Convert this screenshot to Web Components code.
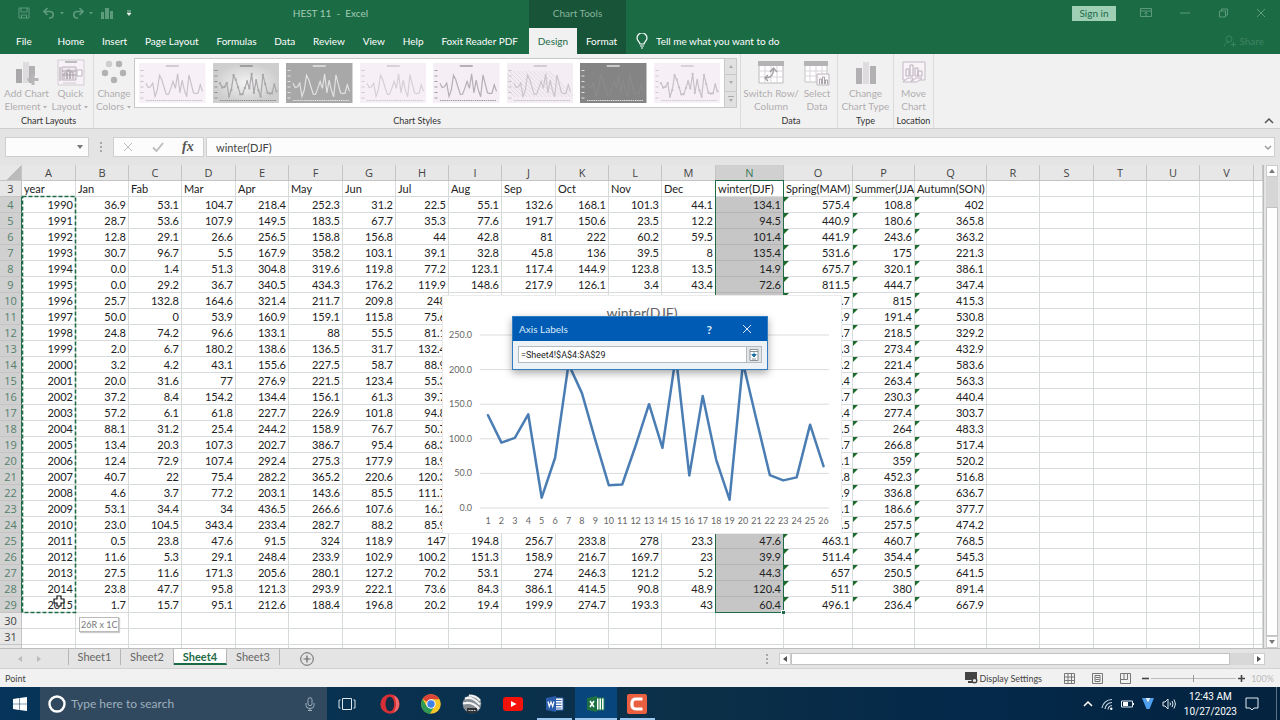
<!DOCTYPE html>
<html lang="en">
<head>
<meta charset="utf-8">
<title>HEST 11 - Excel</title>
<style>
  :root {
    --green: #1b6b45;
    --green-dark: #185437;
    --green-soft: #5d9b7d;
    --chrome: #e4e4e4;
    --ribbon: #f2f1f1;
    --line: #cfcfcf;
    --disabled: #b0aeb0;
    --font-ui: Lato, "Open Sans", sans-serif;
  }
  body {
    margin: 0;
    height: 100vh;
    overflow: hidden;
    display: flex;
    flex-direction: column;
    font-family: var(--font-ui);
    font-size: 11px;
    color: #333;
    background: var(--chrome);
  }
</style>
</head>
<body>
<excel-header></excel-header>
<excel-ribbon></excel-ribbon>
<formula-bar value="winter(DJF)"></formula-bar>
<sheet-view>
  <line-chart heading="winter(DJF)"></line-chart>
  <axis-dialog heading="Axis Labels" value="=Sheet4!$A$4:$A$29"></axis-dialog>
</sheet-view>
<sheet-tabs active="Sheet4" names="Sheet1,Sheet2,Sheet4,Sheet3"></sheet-tabs>
<status-bar></status-bar>
<task-bar></task-bar>

<script>
const SERIES = [134.1, 94.5, 101.4, 135.4, 14.9, 72.6, 208, 166, 98, 33, 34, 90, 150, 87, 220, 47, 162, 70, 12, 210, 128, 47.6, 39.9, 44.3, 120.4, 60.4]

const ICONS = {
  save: ['0 0 12 12', '<path d="M1 1h10v10H1zM3 1v4h6V1M3.500 11V8h5v3" fill="none" stroke="currentColor"/>'],
  undo: ['0 0 12 12', '<path d="M4.500 1L1 4.500 4.500 8M1 4.500h6.500a3.300 3.300 0 0 1 0 6.500H6" fill="none" stroke="currentColor" stroke-width="1.600"/>'],
  redo: ['0 0 12 12', '<path d="M7.500 1L11 4.500 7.500 8M11 4.500H4.500a3.300 3.300 0 0 0 0 6.500H6" fill="none" stroke="currentColor" stroke-width="1.600"/>'],
  bars: ['0 0 12 12', '<path d="M0 5h3v7H0zM4 1h4v11H4zM9 4h3v8H9z" fill="currentColor"/>'],
  caret: ['0 0 6 4', '<path d="M1 1h4L3 3.500z" fill="currentColor"/>'],
  customize: ['0 0 6 6', '<path d="M1 1h4M1 3h4L3 5.500z" fill="currentColor" stroke="currentColor" stroke-width=".6"/>'],
  bulb: ['0 0 12 16', '<path d="M4 11c0-2-3-3-3-6a5 5 0 0 1 10 0c0 3-3 4-3 6zM4 13h4M5 15h2" fill="none" stroke="currentColor" stroke-width="1.200"/>'],
  display: ['0 0 12 10', '<path d="M.5.500h11v8H.5z" fill="none" stroke="currentColor"/><path d="M.5 3h11M6 8V4M4.500 5.500L6 4l1.500 1.500" fill="none" stroke="currentColor"/>'],
  minimize: ['0 0 10 10', '<path d="M0 5h10" stroke="currentColor"/>'],
  restore: ['0 0 10 10', '<path d="M1.500 3h6v6h-6zM3.500 3V1h6v6h-2" fill="none" stroke="currentColor"/>'],
  close: ['0 0 10 10', '<path d="M1 1l8 8M9 1L1 9" stroke="currentColor" fill="none"/>'],
  share: ['0 0 12 12', '<circle cx="5" cy="4" r="3" fill="none" stroke="currentColor"/><path d="M0 11.500c.5-3 2.500-4.500 5-4.500M7 9.500h5M9.500 7v5" fill="none" stroke="currentColor"/>'],
  addElement: ['0 0 26 26', '<path d="M2 9h6v14H2z" fill="#a9a7aa"/><path d="M9 2h6v21H9z" fill="#dedcdf"/><path d="M15 6h6v10h-3v7h-3z" fill="#b2b0b3"/><path d="M19 14v11M13.500 19.500h11" stroke="#b8b6b9" stroke-width="3"/>'],
  quickLayout: ['0 0 28 28', '<path d="M1 1h26v25H1z" fill="#f7f2f7" stroke="#d3cbd3"/><path d="M8 3h12" stroke="#aaa" stroke-width="1.500"/><path d="M5 8h14v13H5z" fill="#eee8ee" stroke="#bbb3bb"/><path d="M3 8v14M7 20v-6h3v6M10 20v-9h3v9M13 20v-7h3v7M5 12h14M5 16h14" stroke="#a8a2a8" fill="none"/><path d="M20 11h5v6h-5z" fill="#fff" stroke="#bbb3bb"/><path d="M6 24h13" stroke="#ccc"/>'],
  colors: ['0 0 28 26', '<g fill="#b3b1b3"><circle cx="9" cy="4" r="3.200" fill="#cfcdcf"/><circle cx="19" cy="4" r="3.200"/><circle cx="5" cy="13" r="3.200"/><circle cx="23" cy="13" r="3.200"/><circle cx="14" cy="20" r="3.200"/></g>'],
  switchData: ['0 0 26 26', '<path d="M1 3h24v20H1z" fill="#fff" stroke="#bcb9bc"/><path d="M0 1h26v5H0z" fill="#b5b3b5"/><path d="M1 11h24M1 17h24M7 6v17M13 6v17M19 6v17" stroke="#d9d5d9"/><path d="M7.500 18c6 0 8-3 8-9M10 15l-3 3 3 3M12 12l3.500-4 3.500 4" fill="none" stroke="#a19fa1" stroke-width="1.400"/>'],
  selectData: ['0 0 26 26', '<path d="M1 3h22v19H1z" fill="#fff" stroke="#c4c1c4"/><path d="M0 1h24v5H0z" fill="#b5b3b5"/><path d="M1 11h22M1 16h22M6 6v16M12 6v16M18 6v16" stroke="#d9d5d9"/><path d="M13 14h12v11H13z" fill="#faf7fa" stroke="#bbb5bb"/><path d="M15.500 24v-5h2v5M18.500 24v-7h2v7M21.500 24v-4h2v4" fill="none" stroke="#aaa5aa"/>'],
  chartType: ['0 0 26 26', '<path d="M3 8h6v16H3z" fill="#b2b0b3"/><path d="M10 2h6v22h-6z" fill="#dedcdf"/><path d="M17 6h6v18h-6z" fill="#b2b0b3"/>'],
  moveChart: ['0 0 26 26', '<path d="M2 2h22v18H2z" fill="#f7f3f7" stroke="#c5b9c5"/><path d="M5 16V9h3v7zM9 16V5h3v11zM14 16V8h3v8zM17 16v-5h4v5z" fill="none" stroke="#bcb0bc"/><path d="M2 22l5-4h5l-2 4zM10 22l5-4h6l-5 4z" fill="#f7f3f7" stroke="#c5b9c5"/>'],
  check: ['0 0 12 10', '<path d="M1 5.500L4.500 9 11 1" fill="none" stroke="currentColor" stroke-width="1.800"/>'],
  chevronUp: ['0 0 10 6', '<path d="M1 5l4-4 4 4" fill="none" stroke="currentColor" stroke-width="1.500"/>'],
  chevronDown: ['0 0 8 5', '<path d="M1 1l3 3 3-3" fill="none" stroke="currentColor" stroke-width="1.400"/>'],
  up: ['0 0 8 6', '<path d="M1 5h6L4 1z" fill="currentColor"/>'],
  down: ['0 0 8 6', '<path d="M1 1h6L4 5z" fill="currentColor"/>'],
  upSmall: ['0 0 4 3', '<path d="M0 3h4L2 0z" fill="currentColor"/>'],
  downSmall: ['0 0 4 3', '<path d="M0 0h4L2 3z" fill="currentColor"/>'],
  more: ['0 0 6 6', '<path d="M0 0h6v1H0zM1 3h4L3 6z" fill="currentColor"/>'],
  left: ['0 0 6 8', '<path d="M5 1v6L1 4z" fill="currentColor"/>'],
  right: ['0 0 6 8', '<path d="M1 1v6l4-3z" fill="currentColor"/>'],
  dots: ['0 0 2 10', '<path d="M0 0h2v2H0zM0 4h2v2H0zM0 8h2v2H0z" fill="#a8a8a8"/>'],
  plusCircle: ['0 0 14 14', '<circle cx="7" cy="7" r="6.300" fill="none" stroke="currentColor"/><path d="M7 3.500v7M3.500 7h7" stroke="currentColor" stroke-width="1.200"/>'],
  picker: ['0 0 12 12', '<path d="M2 .5h8v11H2z" fill="#fff" stroke="#8c9296"/><path d="M2 2.500h8M4 10h4" stroke="#8c9296"/><path d="M6 3.500v4M3.800 5.500L6 8l2.200-2.500z" stroke="#1c72a8" fill="#1c72a8"/>'],
  cross: ['0 0 12 14', '<path d="M4 1h4v3h3v4H8v3H4V8H1V4h3z" fill="#fff" stroke="#111" stroke-width="1.200"/>'],
  monitor: ['0 0 13 12', '<path d="M0 0h12v8H0zM3 9h5v2H3z" fill="#444"/><circle cx="9.500" cy="8.500" r="2.300" fill="#eee" stroke="#444" stroke-width="1.400"/>'],
  viewNormal: ['0 0 11 11', '<path d="M.5.500h10v10H.5zM.5 4h10M.5 7.500h10M4 .5v10M7.500.500v10" fill="none" stroke="#777"/>'],
  viewPage: ['0 0 11 11', '<path d="M.5.500h10v10H.5zM3 2.500h5v6H3zM3.500 4.500h4M3.500 6.500h4" fill="none" stroke="#777"/>'],
  viewBreak: ['0 0 11 11', '<path d="M.5.500h10v10H.5zM4 .5v6h3.500v-6M.5 6.500H4" fill="none" stroke="#777"/>'],
  minus: ['0 0 7 7', '<path d="M0 3.500h7" stroke="currentColor" stroke-width="1.600"/>'],
  plus: ['0 0 7 7', '<path d="M0 3.500h7M3.500 0v7" stroke="currentColor" stroke-width="1.600"/>'],
  windows: ['0 0 14 14', '<path d="M0 2l6-1v5.700H0zM6.500.900L14 0v6.700H6.500zM0 7.200h6V13l-6-1zM6.500 7.200H14V14l-7.500-1z" fill="#fff"/>'],
  cortana: ['0 0 18 18', '<circle cx="9" cy="9" r="7.500" fill="none" stroke="#fff" stroke-width="2.400"/>'],
  mic: ['0 0 10 14', '<rect x="3" y=".7" width="4" height="8" rx="2" fill="none" stroke="#9fb0be"/><path d="M1 6v2.500a4 3 0 0 0 8 0V6M5 11.500V14M3 13.500h4" fill="none" stroke="#9fb0be"/>'],
  taskView: ['0 0 18 14', '<path d="M4.500 1.500h9v11h-9zM2.500 3H1v8h1.500M15.500 3H17v8h-1.500" fill="none" stroke="#dbe6ee"/>'],
  opera: ['0 0 20 20', '<circle cx="10" cy="10" r="9.700" fill="#d62f35"/><path d="M13 1a9.700 9.700 0 0 1 0 18c4-4 4-14 0-18z" fill="#f06d6d"/><ellipse cx="9.800" cy="10" rx="4.300" ry="7.300" fill="#0d2c45"/>'],
  chrome: ['0 0 20 20', '<circle cx="10" cy="10" r="9.800" fill="#f6c628"/><path d="M10 10L1.500 5A9.800 9.800 0 0 1 18.500 5.200H10z" fill="#dc4437"/><path d="M10 10L5.800 12.500 1.500 5A9.800 9.800 0 0 0 9 19.800L13.300 12.500z" fill="#2e9a55"/><circle cx="10" cy="10" r="4.700" fill="#fff"/><circle cx="10" cy="10" r="3.700" fill="#3f7fe8"/>'],
  earth: ['0 0 20 20', '<circle cx="10" cy="10" r="9.300" fill="#858c92"/><path d="M3 4.500c6-2 10 1 15 6M1 9.500c7-2 12 0 16 5.500M7 1.500c5 0 8 1.500 11 5" fill="none" stroke="#f2f4f5" stroke-width="2.200"/><path d="M5 14h10v5H5z" fill="#2f3337"/><path d="M6.500 16.500h7" stroke="#ccc" stroke-dasharray="2 .7"/>'],
  youtube: ['0 0 20 14', '<rect width="20" height="14" rx="3" fill="#f5120b"/><path d="M8 4l5.500 3L8 10z" fill="#fff"/>'],
  word: ['0 0 18 16', '<path d="M9 2h8v12H9z" fill="#fff" stroke="#3a66b3"/><path d="M10 4.500h5.500M10 7h5.500M10 9.500h5.500M10 12h5.500" stroke="#3a66b3"/><path d="M0 2l10-2v16L0 14z" fill="#2b5bab"/><path d="M2 5.500l1.300 5L5 6l1.700 4.500L8 5.500" fill="none" stroke="#fff" stroke-width="1.200"/>'],
  excel: ['0 0 18 16', '<path d="M9 2h8v12H9z" fill="#fff" stroke="#1f7a4d"/><path d="M12 2v12M14.500 2v12" stroke="#1f7a4d"/><path d="M0 2l10-2v16L0 14z" fill="#1d7044"/><path d="M3 5l4 6M7 5l-4 6" stroke="#fff" stroke-width="1.500"/>'],
  camtasia: ['0 0 20 20', '<rect width="20" height="20" rx="2" fill="#e95f40"/><path d="M15.500 5H8.500A3.500 3.500 0 0 0 5 8.500v3A3.500 3.500 0 0 0 8.500 15h7" fill="none" stroke="#fff" stroke-width="3.200"/>'],
  wifi: ['0 0 12 12', '<path d="M1 10A10 10 0 0 1 11 1.500M4 11A7 7 0 0 1 11 4.500M7 11.500A4.500 4.500 0 0 1 11 7.500" fill="none" stroke="#c9d4dd" stroke-width="1.200"/><circle cx="10.300" cy="10.800" r="1.200" fill="#fff"/>'],
  battery: ['0 0 13 8', '<path d="M.5 1h11v6H.5z" fill="none" stroke="#dfe6ec"/><path d="M2 2h5v4H2zM12 3h1v2h-1z" fill="#fff"/>'],
  vpn: ['0 0 12 11', '<path d="M0 0h3.500L6 5l2.500-5H12L7.500 11h-3z" fill="#4f9ff0"/><path d="M3.500 0h5L6 5z" fill="#dff0ff"/>'],
  speaker: ['0 0 14 12', '<path d="M1 4h2l3-3v10L3 8H1z" fill="none" stroke="#dfe6ec"/><path d="M8 4.500q1 1.500 0 3M10 3q2 3 0 6M12 1.500q3 4.500 0 9" fill="none" stroke="#dfe6ec"/>'],
  notice: ['0 0 14 14', '<path d="M1 1h12v10H9l-2 2-2-2H1z" fill="none" stroke="#e4ebf0"/>']
}

class AppIcon extends HTMLElement {
  connectedCallback() {
    const [box, shapes] = ICONS[this.getAttribute('name')]
    const [, , width, height] = box.split(' ')
    this.attachShadow({ mode: 'open' })
    this.shadowRoot.innerHTML = `
      <style>
        :host { display: inline-flex; flex: none; }
        svg { display: block; }
      </style>
      <svg viewBox="${box}" width="${width}" height="${height}" aria-hidden="true">${shapes}</svg>
    `
  }
}

class ExcelHeader extends HTMLElement {
  constructor() {
    super()
    this.attachShadow({ mode: 'open' })
    const tabs = ['Home', 'Insert', 'Page Layout', 'Formulas', 'Data', 'Review', 'View', 'Help', 'Foxit Reader PDF']
    this.shadowRoot.innerHTML = `
      <style>
        :host {
          display: grid;
          grid-template-columns: 529px 97px 1fr;
          grid-template-rows: 28px 26px;
          flex: none;
          background: var(--green);
          font-size: 10px;
          color: #fff;
        }
        button {
          border: 0;
          padding: 0;
          background: none;
          font: inherit;
          color: inherit;
          white-space: nowrap;
        }
        .quick, .tabs, .window, .tell { display: flex; align-items: center; padding-bottom: 2px; }
        .quick { padding-left: 18px; color: var(--green-soft); }
        .quick button { display: flex; align-items: center; gap: 4px; margin-right: 13px; }
        .quick button:nth-child(2), .quick button:nth-child(3) { margin-right: 7px; }
        .quick .more { margin: 0; color: #fff; }
        h1 {
          flex: 1;
          margin: 0;
          font-size: 10px;
          font-weight: normal;
          text-align: center;
          white-space: pre;
          color: #a3cbb6;
        }
        .tabs { justify-content: space-between; padding: 0 11px 0 16px; }
        .tabs button:first-child { margin-right: 8px; }
        .context { display: grid; place-items: center; padding-bottom: 2px; background: var(--green-dark); color: #86b59d; }
        .pair { display: grid; grid-template-columns: 48px 1fr; background: var(--green-dark); }
        .pair .active { background: var(--ribbon); color: #216a48; }
        .window { justify-content: flex-end; gap: 28px; padding-right: 14px; color: var(--green-soft); }
        .window .sign { width: 44px; height: 15px; margin-right: -4px; background: #9fd0b5; color: #236a48; }
        .window button { display: flex; align-items: center; justify-content: center; }
        .tell { justify-content: space-between; padding: 0 16px 0 10px; }
        .tell button { display: flex; align-items: center; gap: 8px; }
        .tell .share { gap: 3px; color: #3b8460; }
      </style>
      <div class="quick">
        <button aria-label="Save"><app-icon name="save"></app-icon></button>
        <button aria-label="Undo"><app-icon name="undo"></app-icon><app-icon name="caret"></app-icon></button>
        <button aria-label="Redo"><app-icon name="redo"></app-icon><app-icon name="caret"></app-icon></button>
        <button aria-label="Chart"><app-icon name="bars"></app-icon></button>
        <button class="more" aria-label="Customize"><app-icon name="customize"></app-icon></button>
        <h1>HEST 11  -  Excel</h1>
      </div>
      <div class="context">Chart Tools</div>
      <div class="window">
        <button class="sign">Sign in</button>
        <button aria-label="Ribbon display"><app-icon name="display"></app-icon></button>
        <button aria-label="Minimize"><app-icon name="minimize"></app-icon></button>
        <button aria-label="Restore"><app-icon name="restore"></app-icon></button>
        <button aria-label="Close"><app-icon name="close"></app-icon></button>
      </div>
      <nav class="tabs"><button>File</button>${tabs.map(tab => `<button>${tab}</button>`).join('')}</nav>
      <nav class="pair"><button class="active">Design</button><button>Format</button></nav>
      <div class="tell">
        <button><app-icon name="bulb"></app-icon>Tell me what you want to do</button>
        <button class="share"><app-icon name="share"></app-icon>Share</button>
      </div>
    `
  }
}

class RibbonGroup extends HTMLElement {
  constructor() {
    super()
    this.attachShadow({ mode: 'open' })
    this.shadowRoot.innerHTML = `
      <style>
        :host {
          display: flex;
          flex-direction: column;
          box-sizing: border-box;
          border-right: 1px solid #dcdbdc;
        }
        .items { display: flex; justify-content: center; height: 59px; }
        footer { font-size: 9px; line-height: 15px; text-align: center; white-space: nowrap; color: #333; }
      </style>
      <div class="items"><slot></slot></div>
      <footer></footer>
    `
  }

  connectedCallback() {
    this.shadowRoot.querySelector('footer').textContent = this.getAttribute('label')
  }
}

class RibbonCommand extends HTMLElement {
  connectedCallback() {
    const [first, second] = this.getAttribute('label').split('|')
    const caret = this.hasAttribute('menu') ? '<app-icon name="caret"></app-icon>' : ''
    this.attachShadow({ mode: 'open' })
    this.shadowRoot.innerHTML = `
      <style>
        :host { display: block; flex: none; }
        button {
          display: flex;
          flex-direction: column;
          align-items: center;
          width: 100%;
          padding: 4px 0 0;
          border: 0;
          background: none;
          font: inherit;
          font-size: 10px;
          line-height: 13px;
          color: var(--disabled);
        }
        .icon { display: grid; place-items: center; height: 29px; }
        .line { display: flex; align-items: center; gap: 2px; white-space: nowrap; }
      </style>
      <button>
        <span class="icon"><app-icon name="${this.getAttribute('icon')}"></app-icon></span>
        <span class="line">${first}</span>
        <span class="line">${second}${caret}</span>
      </button>
    `
  }
}

class StyleGallery extends HTMLElement {
  #styles = [
    { back: '#f7f0f7', line: '#c9c4c9', title: '#c5c0c5' },
    { back: 'url(#fade)', line: '#a9a7a9', title: '#8f8d8f', dots: true },
    { back: '#a9a8a9', line: '#e2e1e2', title: '#e6e6e6' },
    { back: '#f6f0f6', line: '#d5d0d5', title: '#cdc8cd' },
    { back: '#f6eef5', line: '#b3b0b3', title: '#9f9c9f' },
    { back: '#f4eef4', line: '#c9c5c9', title: '#c5c0c5', hatch: true },
    { back: '#858485', line: '#8c8b8c', title: '#e0e0e0' },
    { back: '#f7eff6', line: '#c6c2c6', title: '#cfcacf', dots: true }
  ]

  constructor() {
    super()
    this.attachShadow({ mode: 'open' })
    this.shadowRoot.innerHTML = `
      <style>
        :host {
          display: flex;
          flex: 1;
          box-sizing: border-box;
          height: 50px;
          margin: 4px 3px 0 0;
          border: 1px solid #c9c8c9;
          background: #fff;
        }
        .list { flex: 1; display: flex; gap: 7px; padding: 4px; }
        .list button { flex: 1; min-width: 0; padding: 0; border: 0; background: none; }
        .list svg { display: block; width: 100%; height: 40px; }
        .scroll { display: flex; flex-direction: column; width: 12px; background: #e2e1e2; }
        .scroll button {
          flex: 1;
          display: grid;
          place-items: center;
          padding: 0;
          border: 0;
          border-left: 1px solid #c9c8c9;
          border-bottom: 1px solid #c9c8c9;
          background: none;
          color: #aaa;
        }
        .scroll button:last-child { border-bottom: 0; }
      </style>
      <div class="list">${this.#styles.map((style, index) => this.#thumb(style, index)).join('')}</div>
      <div class="scroll">
        <button aria-label="Previous styles"><app-icon name="upSmall"></app-icon></button>
        <button aria-label="Next styles"><app-icon name="downSmall"></app-icon></button>
        <button aria-label="More styles"><app-icon name="more"></app-icon></button>
      </div>
    `
  }

  #thumb({ back, line, title, dots, hatch }, index) {
    const points = SERIES.map((value, i) => [7 + i * 2.28, 35 - value * 0.11])
    const marks = dots ? points.map(([x, y]) => `<path d="M${x - 1} ${y - 1}h2v2h-2z" fill="${line}"/>`).join('') : ''
    const stripes = hatch ? Array.from({ length: 16 }, (_, i) => `<path d="M${i * 4 - 18} 8l26 26" stroke="#d3ced3" stroke-width=".6"/>`).join('') : ''
    return `
      <button aria-label="Style ${index + 1}">
        <svg viewBox="0 0 67 40" preserveAspectRatio="none">
          <defs><radialGradient id="fade"><stop offset="0" stop-color="#f4f3f4"/><stop offset="1" stop-color="#cfcecf"/></radialGradient></defs>
          <rect width="67" height="40" fill="${back}"/>
          ${stripes}
          <path d="M27 3h13" stroke="${title}" stroke-width="1.500"/>
          <path d="M3 7v29" stroke="${title}" stroke-width="3" stroke-dasharray="1 4.500"/>
          <path d="M7 37.500h57" stroke="${title}" stroke-dasharray="1.500 .7"/>
          <polyline points="${points.map(point => point.join()).join(' ')}" fill="none" stroke="${line}" stroke-width="1.200"/>
          ${marks}
        </svg>
      </button>
    `
  }
}

class ExcelRibbon extends HTMLElement {
  constructor() {
    super()
    this.attachShadow({ mode: 'open' })
    this.shadowRoot.innerHTML = `
      <style>
        :host {
          display: flex;
          flex: none;
          border-bottom: 1px solid var(--line);
          background: var(--ribbon);
        }
        .layouts { width: 94px; padding-left: 4px; }
        .styles { flex: 1; max-width: 647px; }
        .data { width: 97px; padding-left: 4px; }
        .type { width: 56px; }
        .location { width: 40px; }
        .w40 { width: 40px; }
        .w44 { width: 44px; }
        .w52 { width: 52px; }
        .collapse {
          display: flex;
          align-items: flex-end;
          margin-left: auto;
          padding: 0 6px 4px;
          border: 0;
          background: none;
          color: #555;
        }
      </style>
      <ribbon-group class="layouts" label="Chart Layouts">
        <ribbon-command class="w44" icon="addElement" label="Add Chart|Element" menu></ribbon-command>
        <ribbon-command class="w44" icon="quickLayout" label="Quick|Layout" menu></ribbon-command>
      </ribbon-group>
      <ribbon-group class="styles" label="Chart Styles">
        <ribbon-command class="w40" icon="colors" label="Change|Colors" menu></ribbon-command>
        <style-gallery></style-gallery>
      </ribbon-group>
      <ribbon-group class="data" label="Data">
        <ribbon-command class="w52" icon="switchData" label="Switch Row/|Column"></ribbon-command>
        <ribbon-command class="w40" icon="selectData" label="Select|Data"></ribbon-command>
      </ribbon-group>
      <ribbon-group class="type" label="Type">
        <ribbon-command class="w52" icon="chartType" label="Change|Chart Type"></ribbon-command>
      </ribbon-group>
      <ribbon-group class="location" label="Location">
        <ribbon-command icon="moveChart" label="Move|Chart"></ribbon-command>
      </ribbon-group>
      <button class="collapse" aria-label="Collapse ribbon"><app-icon name="chevronUp"></app-icon></button>
    `
  }
}

class FormulaBar extends HTMLElement {
  connectedCallback() {
    this.attachShadow({ mode: 'open' })
    this.shadowRoot.innerHTML = `
      <style>
        :host { display: flex; align-items: center; flex: none; height: 36px; padding: 0 5px; }
        .box {
          display: flex;
          align-items: center;
          box-sizing: border-box;
          height: 20px;
          border: 1px solid var(--line);
          background: #fcfcfc;
        }
        .name { width: 84px; margin-right: 11px; padding-right: 4px; color: #777; }
        .tools { width: 91px; margin: 0 2px 0 11px; justify-content: space-around; }
        .formula { flex: 1; padding: 0 2px 0 9px; color: #999; }
        input {
          flex: 1;
          min-width: 0;
          padding: 0;
          border: 0;
          background: none;
          font: inherit;
          color: #444;
        }
        button { display: flex; padding: 0; border: 0; background: none; color: #bbb; }
        .fx { font: italic bold 14px "Liberation Serif", serif; color: #555; }
      </style>
      <div class="box name"><input aria-label="Name box"><app-icon name="down"></app-icon></div>
      <app-icon name="dots"></app-icon>
      <div class="box tools">
        <button aria-label="Cancel"><app-icon name="close"></app-icon></button>
        <button aria-label="Enter"><app-icon name="check"></app-icon></button>
        <button class="fx">fx</button>
      </div>
      <div class="box formula">
        <input aria-label="Formula" value="${this.getAttribute('value')}">
        <app-icon name="chevronDown"></app-icon>
      </div>
    `
  }
}

class SheetView extends HTMLElement {
  #widths = [22, 54, 53, 53, 54, 53, 54, 53, 53, 53, 54, 53, 53, 54, 68, 69, 62, 72, 53, 54, 53, 53, 54]
  #heads = ['year', 'Jan', 'Fab', 'Mar', 'Apr', 'May', 'Jun', 'Jul', 'Aug', 'Sep', 'Oct', 'Nov', 'Dec', 'winter(DJF)', 'Spring(MAM)', 'Summer(JJA)', 'Autumn(SON)']
  // a dash is an empty cell
  #rows = `
    1990 36.9 53.1 104.7 218.4 252.3 31.2 22.5 55.1 132.6 168.1 101.3 44.1 134.1 575.4 108.8 402
    1991 28.7 53.6 107.9 149.5 183.5 67.7 35.3 77.6 191.7 150.6 23.5 12.2 94.5 440.9 180.6 365.8
    1992 12.8 29.1 26.6 256.5 158.8 156.8 44 42.8 81 222 60.2 59.5 101.4 441.9 243.6 363.2
    1993 30.7 96.7 5.5 167.9 358.2 103.1 39.1 32.8 45.8 136 39.5 8 135.4 531.6 175 221.3
    1994 0.0 1.4 51.3 304.8 319.6 119.8 77.2 123.1 117.4 144.9 123.8 13.5 14.9 675.7 320.1 386.1
    1995 0.0 29.2 36.7 340.5 434.3 176.2 119.9 148.6 217.9 126.1 3.4 43.4 72.6 811.5 444.7 347.4
    1996 25.7 132.8 164.6 321.4 211.7 209.8 248 - - - - - - .7 815 415.3
    1997 50.0 0 53.9 160.9 159.1 115.8 75.6 - - - - - - .9 191.4 530.8
    1998 24.8 74.2 96.6 133.1 88 55.5 81.1 - - - - - - .7 218.5 329.2
    1999 2.0 6.7 180.2 138.6 136.5 31.7 132.4 - - - - - - .3 273.4 432.9
    2000 3.2 4.2 43.1 155.6 227.5 58.7 88.9 - - - - - - .2 221.4 583.6
    2001 20.0 31.6 77 276.9 221.5 123.4 55.3 - - - - - - .4 263.4 563.3
    2002 37.2 8.4 154.2 134.4 156.1 61.3 39.7 - - - - - - .7 230.3 440.4
    2003 57.2 6.1 61.8 227.7 226.9 101.8 94.8 - - - - - - .4 277.4 303.7
    2004 88.1 31.2 25.4 244.2 158.9 76.7 50.7 - - - - - - .5 264 483.3
    2005 13.4 20.3 107.3 202.7 386.7 95.4 68.3 - - - - - - .7 266.8 517.4
    2006 12.4 72.9 107.4 292.4 275.3 177.9 18.9 - - - - - - .1 359 520.2
    2007 40.7 22 75.4 282.2 365.2 220.6 120.3 - - - - - - .8 452.3 516.8
    2008 4.6 3.7 77.2 203.1 143.6 85.5 111.7 - - - - - - .9 336.8 636.7
    2009 53.1 34.4 34 436.5 266.6 107.6 16.2 - - - - - - .1 186.6 377.7
    2010 23.0 104.5 343.4 233.4 282.7 88.2 85.9 - - - - - - .5 257.5 474.2
    2011 0.5 23.8 47.6 91.5 324 118.9 147 194.8 256.7 233.8 278 23.3 47.6 463.1 460.7 768.5
    2012 11.6 5.3 29.1 248.4 233.9 102.9 100.2 151.3 158.9 216.7 169.7 23 39.9 511.4 354.4 545.3
    2013 27.5 11.6 171.3 205.6 280.1 127.2 70.2 53.1 274 246.3 121.2 5.2 44.3 657 250.5 641.5
    2014 23.8 47.7 95.8 121.3 293.9 222.1 73.6 84.3 386.1 414.5 90.8 48.9 120.4 511 380 891.4
    2015 1.7 15.7 95.1 212.6 188.4 196.8 20.2 19.4 199.9 274.7 193.3 43 60.4 496.1 236.4 667.9
  `.trim().split('\n').map(row => row.trim().split(' '))

  constructor() {
    super()
    this.attachShadow({ mode: 'open' })
    this.shadowRoot.innerHTML = `
      <style>
        :host { display: flex; flex: 1; min-height: 0; position: relative; }
        .grid { flex: 1; min-width: 0; overflow: hidden; }
        table { width: 100%; table-layout: fixed; border-spacing: 0; background: #fff; }
        td, th {
          box-sizing: border-box;
          height: 16px;
          padding: 0 2px;
          border: 0 solid #d6dadb;
          border-width: 0 1px 1px 0;
          line-height: 15px;
          overflow: hidden;
          white-space: nowrap;
          text-align: right;
          color: #222;
        }
        tr.heads td { text-align: left; }
        th {
          padding: 0;
          background: #e7e7e7;
          border-color: #c4c4c4;
          font-family: "Open Sans", sans-serif;
          font-weight: normal;
          text-align: center;
          color: #444;
        }
        th.picked { background: #d0d0d0; color: #3c765a; }
        tbody th.picked { border-right-color: #2a7350; color: #54806b; }
        td.shade { background: #c6c6c6; border-bottom-color: #b4b4b4; }
        td.warn { background: linear-gradient(135deg, #1d6b2c 3px, transparent 4px); }
        th.corner { background: linear-gradient(135deg, #e7e7e7 60%, #bbb 61%); }
        .scroll {
          display: flex;
          flex-direction: column;
          align-items: center;
          width: 17px;
          box-sizing: border-box;
          border-left: 1px solid #bbb;
          color: #777;
        }
        .scroll button {
          display: grid;
          place-items: center;
          width: 12px;
          height: 12px;
          padding: 0;
          border: 1px solid #ccc;
          background: #fff;
          color: inherit;
        }
        .scroll .track { width: 12px; height: 30px; background: #d6d6d6; }
        .scroll .thumb { flex: 1; width: 10px; border: 1px solid #c2c2c2; background: #fff; }
        .over { position: absolute; box-sizing: border-box; }
        .ants { left: 21px; top: 30px; }
        .range { left: 715px; top: 15px; width: 69px; height: 433px; border: 1px solid #1f6b47; }
        .range::after {
          content: "";
          position: absolute;
          right: -2px;
          bottom: -2px;
          width: 3px;
          height: 3px;
          border: 1px solid #fff;
          border-width: 1px 0 0 1px;
          background: #1f6b47;
        }
        .tip {
          left: 79px;
          top: 452px;
          padding: 0 1px;
          border: 1px solid #bbb;
          background: #fff;
          font-size: 9px;
          line-height: 13px;
          color: #777;
          box-shadow: 1px 1px 1px #ccc;
        }
        .pointer { left: 53px; top: 430px; }
      </style>
      <div class="grid"></div>
      <div class="scroll">
        <button aria-label="Scroll up"><app-icon name="up"></app-icon></button>
        <div class="track"></div>
        <div class="thumb"></div>
        <button aria-label="Scroll down"><app-icon name="down"></app-icon></button>
      </div>
      <svg class="over ants" width="56" height="420">
        <rect x="1.500" y="1.500" width="53" height="416" fill="none" stroke="#1f6b47" stroke-width="1.600" stroke-dasharray="4 2"/>
      </svg>
      <div class="over range"></div>
      <slot></slot>
      <div class="over tip">26R x 1C</div>
      <app-icon class="over pointer" name="cross"></app-icon>
    `
  }

  connectedCallback() {
    this.#render()
  }

  #cell(value, column, filled) {
    const kind = filled && column === 13 ? ' class="shade"' : filled && column > 13 && column < 17 ? ' class="warn"' : ''
    return `<td${kind}>${!value || value === '-' ? '' : value}</td>`
  }

  #line(number, values) {
    const filled = number > 3 && number < 30
    const cells = Array.from({ length: 23 }, (_, column) => this.#cell(values[column], column, filled)).join('')
    return `<tr${number === 3 ? ' class="heads"' : ''}><th${filled ? ' class="picked"' : ''}>${number || ''}</th>${cells}</tr>`
  }

  #render() {
    const letters = [...'ABCDEFGHIJKLMNOPQRSTUV']
    this.shadowRoot.querySelector('.grid').innerHTML = `
      <table>
        <colgroup>${this.#widths.map(width => `<col style="width: ${width}px">`).join('')}<col></colgroup>
        <thead><tr>
          <th class="corner"></th>
          ${letters.map(letter => `<th${letter === 'N' ? ' class="picked"' : ''}>${letter}</th>`).join('')}
          <th></th>
        </tr></thead>
        <tbody>
          ${this.#line(3, this.#heads)}
          ${this.#rows.map((row, index) => this.#line(index + 4, row)).join('')}
          ${this.#line(30, [])}
          ${this.#line(31, [])}
          ${this.#line(0, [])}
        </tbody>
      </table>
    `
  }
}

class LineChart extends HTMLElement {
  connectedCallback() {
    this.attachShadow({ mode: 'open' })
    const x = index => 46 + index * 13.42
    const y = value => 213 - value * 0.692
    const levels = [0, 50, 100, 150, 200, 250]
    this.shadowRoot.innerHTML = `
      <style>
        :host {
          display: block;
          position: absolute;
          left: 442px;
          top: 130px;
          width: 400px;
          height: 239px;
          background: #fff;
          box-shadow: inset 0 0 0 1px #ebebeb;
        }
        text { font-size: 9px; fill: #666; }
        .heading { font-size: 14px; }
      </style>
      <svg width="400" height="239" role="img" aria-label="${this.getAttribute('heading')}">
        <text class="heading" x="200" y="23" text-anchor="middle">${this.getAttribute('heading')}</text>
        ${levels.map(level => `
          <path d="M38 ${y(level)}H387" stroke="#dcdcdc"/>
          <text x="30" y="${y(level) + 3}" text-anchor="end">${level.toFixed(1)}</text>
        `).join('')}
        ${SERIES.map((_, index) => `<text x="${x(index)}" y="229" text-anchor="middle">${index + 1}</text>`).join('')}
        <polyline points="${SERIES.map((value, index) => `${x(index)},${y(value)}`).join(' ')}" fill="none" stroke="#4a7db3" stroke-width="2.500" stroke-linejoin="round" stroke-linecap="round"/>
      </svg>
    `
  }
}

class AxisDialog extends HTMLElement {
  connectedCallback() {
    this.attachShadow({ mode: 'open' })
    this.shadowRoot.innerHTML = `
      <style>
        :host {
          display: block;
          box-sizing: border-box;
          position: absolute;
          left: 512px;
          top: 151px;
          width: 256px;
          padding-bottom: 1px;
          border: 1px solid #2f7cc0;
          background: #edf2f6;
          box-shadow: 0 3px 8px rgba(0, 0, 0, .35);
        }
        header {
          display: flex;
          align-items: center;
          height: 24px;
          padding: 0 15px 0 6px;
          background: #005bb5;
          font-size: 10px;
          color: #dcebf9;
        }
        header span { flex: 1; }
        button { display: grid; place-items: center; padding: 0; border: 0; background: none; font: inherit; color: inherit; }
        .help { margin-right: 30px; font-size: 12px; font-weight: bold; }
        .field {
          display: flex;
          height: 15px;
          margin: 5px;
          border: 1px solid #b3bac0;
          background: #fff;
        }
        input {
          flex: 1;
          min-width: 0;
          padding: 0 2px;
          border: 0;
          background: none;
          outline: 0;
          font: 9px Roboto, sans-serif;
          color: #222;
        }
        .pick { width: 15px; border-left: 1px solid #b3bac0; background: #e3e6e8; }
      </style>
      <header>
        <span>${this.getAttribute('heading')}</span>
        <button class="help">?</button>
        <button aria-label="Close"><app-icon name="close"></app-icon></button>
      </header>
      <div class="field">
        <input aria-label="Axis label range" value="${this.getAttribute('value')}">
        <button class="pick" aria-label="Collapse dialog"><app-icon name="picker"></app-icon></button>
      </div>
    `
  }
}

class SheetTabs extends HTMLElement {
  connectedCallback() {
    const active = this.getAttribute('active')
    const names = this.getAttribute('names').split(',')
    this.attachShadow({ mode: 'open' })
    this.shadowRoot.innerHTML = `
      <style>
        :host {
          display: flex;
          flex: none;
          align-items: center;
          box-sizing: border-box;
          height: 21px;
          border-top: 1px solid #bdbdbd;
          border-bottom: 1px solid #d2d2d2;
          padding-right: 15px;
          color: #666;
        }
        button { display: grid; place-items: center; padding: 0; border: 0; background: none; font: inherit; color: inherit; }
        .move { display: flex; gap: 13px; padding: 0 26px 0 17px; color: #bbb; }
        nav { display: flex; align-self: stretch; padding-bottom: 3px; }
        nav button { width: 53px; padding-bottom: 2px; border-right: 1px solid #b5b5b5; }
        nav button:first-child { border-left: 1px solid #b5b5b5; }
        nav .active { padding: 0; border-bottom: 2px solid var(--green); background: #fff; font-weight: bold; color: #1d6b45; }
        .add { margin: 0 auto 0 20px; }
        .bar { display: flex; align-items: center; width: 486px; margin-left: 11px; background: #d8d8d8; }
        .bar button { width: 12px; height: 12px; box-sizing: border-box; border: 1px solid #ccc; background: #fff; color: #555; }
        .bar .thumb { flex: 1; height: 10px; margin-right: 23px; border: 1px solid #c2c2c2; background: #fff; }
      </style>
      <div class="move">
        <button aria-label="Previous sheets"><app-icon name="left"></app-icon></button>
        <button aria-label="Next sheets"><app-icon name="right"></app-icon></button>
      </div>
      <nav>${names.map(name => `<button${name === active ? ' class="active"' : ''}>${name}</button>`).join('')}</nav>
      <button class="add" aria-label="New sheet"><app-icon name="plusCircle"></app-icon></button>
      <app-icon name="dots"></app-icon>
      <div class="bar">
        <button aria-label="Scroll left"><app-icon name="left"></app-icon></button>
        <div class="thumb"></div>
        <button aria-label="Scroll right"><app-icon name="right"></app-icon></button>
      </div>
    `
  }
}

class StatusBar extends HTMLElement {
  constructor() {
    super()
    this.attachShadow({ mode: 'open' })
    this.shadowRoot.innerHTML = `
      <style>
        :host {
          display: flex;
          flex: none;
          align-items: center;
          height: 18px;
          padding: 0 6px 0 5px;
          background: var(--ribbon);
          font-size: 9px;
          color: #444;
        }
        button { display: flex; align-items: center; gap: 1px; padding: 0; border: 0; background: none; font: inherit; color: inherit; }
        .display { margin: 0 22px 0 auto; }
        .views { display: flex; gap: 17px; margin-right: 11px; }
        .zoom { display: flex; align-items: center; gap: 2px; }
        input { appearance: none; width: 85px; height: 9px; margin: 0; background: linear-gradient(#bbb, #bbb) center / 100% 1px no-repeat; }
        input::-webkit-slider-thumb { appearance: none; width: 1px; height: 7px; background: #999; }
        output { width: 29px; text-align: right; color: #bbb; }
      </style>
      <span>Point</span>
      <button class="display"><app-icon name="monitor"></app-icon>Display Settings</button>
      <div class="views">
        <button aria-label="Normal"><app-icon name="viewNormal"></app-icon></button>
        <button aria-label="Page layout"><app-icon name="viewPage"></app-icon></button>
        <button aria-label="Page break preview"><app-icon name="viewBreak"></app-icon></button>
      </div>
      <div class="zoom">
        <button aria-label="Zoom out"><app-icon name="minus"></app-icon></button>
        <input type="range" aria-label="Zoom">
        <button aria-label="Zoom in"><app-icon name="plus"></app-icon></button>
      </div>
      <output>100%</output>
    `
  }
}

class TaskBar extends HTMLElement {
  #apps = ['opera', 'chrome', 'earth', 'youtube', 'word', 'excel', 'camtasia']
  #running = ['word', 'excel', 'camtasia']

  constructor() {
    super()
    this.attachShadow({ mode: 'open' })
    this.shadowRoot.innerHTML = `
      <style>
        :host {
          display: flex;
          flex: none;
          align-items: stretch;
          height: 33px;
          background: linear-gradient(90deg, #06345a, #0b2f47 55%, #04294a 75%, #03233f);
          color: #fff;
        }
        button { display: grid; place-items: center; padding: 0; border: 0; background: none; font: inherit; color: inherit; }
        .start { width: 40px; }
        label {
          display: flex;
          align-items: center;
          gap: 5px;
          box-sizing: border-box;
          width: 287px;
          padding: 0 12px 0 8px;
          background: #31495e;
        }
        input { flex: 1; min-width: 0; padding: 0; border: 0; background: none; font: inherit; font-size: 12px; }
        input::placeholder { color: #9db0bf; opacity: 1; }
        .view { width: 40px; }
        .apps { display: grid; grid-template-columns: repeat(7, 1fr); width: 289px; margin-left: 2px; }
        .apps button { box-sizing: border-box; border: 0 solid #9cc6ee; margin: 0 3px; }
        .apps .running { border-bottom-width: 2px; padding-top: 2px; }
        .apps .excel { margin: 0; background: #07457c; }
        .tray { display: flex; align-items: center; gap: 8px; margin-left: auto; }
        time { font-family: Roboto, sans-serif; font-size: 10px; line-height: 15px; text-align: center; white-space: nowrap; }
        .notice { margin-right: 17px; }
        .edge { width: 3px; border-left: 1px solid #5b7388; }
      </style>
      <button class="start" aria-label="Start"><app-icon name="windows"></app-icon></button>
      <label>
        <app-icon name="cortana"></app-icon>
        <input placeholder="Type here to search">
        <app-icon name="mic"></app-icon>
      </label>
      <button class="view" aria-label="Task view"><app-icon name="taskView"></app-icon></button>
      <div class="apps">
        ${this.#apps.map(app => `<button class="${app}${this.#running.includes(app) ? ' running' : ''}" aria-label="${app}"><app-icon name="${app}"></app-icon></button>`).join('')}
      </div>
      <div class="tray">
        <app-icon name="chevronUp"></app-icon>
        <app-icon name="wifi"></app-icon>
        <app-icon name="battery"></app-icon>
        <app-icon name="vpn"></app-icon>
        <app-icon name="speaker"></app-icon>
        <time>12:43 AM<br>10/27/2023</time>
        <button class="notice" aria-label="Notifications"><app-icon name="notice"></app-icon></button>
      </div>
      <div class="edge"></div>
    `
  }
}

customElements.define('app-icon', AppIcon)
customElements.define('excel-header', ExcelHeader)
customElements.define('ribbon-group', RibbonGroup)
customElements.define('ribbon-command', RibbonCommand)
customElements.define('style-gallery', StyleGallery)
customElements.define('excel-ribbon', ExcelRibbon)
customElements.define('formula-bar', FormulaBar)
customElements.define('sheet-view', SheetView)
customElements.define('line-chart', LineChart)
customElements.define('axis-dialog', AxisDialog)
customElements.define('sheet-tabs', SheetTabs)
customElements.define('status-bar', StatusBar)
customElements.define('task-bar', TaskBar)
</script>
</body>
</html>
